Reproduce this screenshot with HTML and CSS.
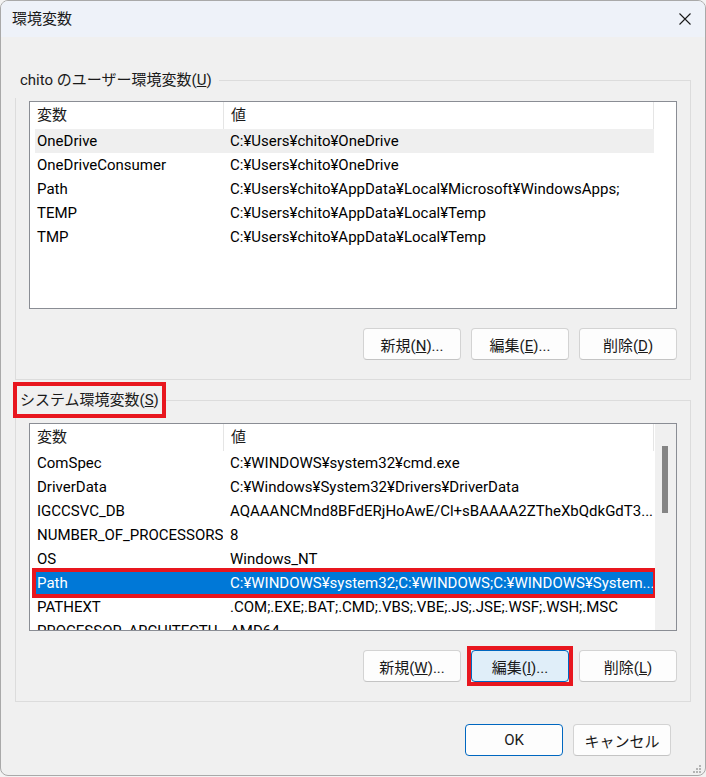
FILE: index.html
```html
<!DOCTYPE html>
<html lang="ja">
<head>
    <meta charset="UTF-8">
    <title>環境変数</title>
    <link rel="stylesheet" href="styles.css">
</head>
<body>

<div class="window">
    <div class="titlebar">
        <span class="title">環境変数</span>
        <svg class="close" width="12" height="12" viewBox="0 0 12 12">
            <path d="M0.5 0.5L11.5 11.5M11.5 0.5L0.5 11.5" stroke="#1a1a1a" stroke-width="1.1" fill="none"/>
        </svg>
    </div>

    <div class="content">
        <fieldset class="group group-user">
            <legend>chito のユーザー環境変数(<u>U</u>)</legend>
            <div class="group-body">
                <div class="list">
                    <div class="list-main">
                        <div class="list-head"><span>変数</span><span>値</span></div>
                        <div class="row hover"><span>OneDrive</span><span>C:¥Users¥chito¥OneDrive</span></div>
                        <div class="row"><span>OneDriveConsumer</span><span>C:¥Users¥chito¥OneDrive</span></div>
                        <div class="row"><span>Path</span><span>C:¥Users¥chito¥AppData¥Local¥Microsoft¥WindowsApps;</span></div>
                        <div class="row"><span>TEMP</span><span>C:¥Users¥chito¥AppData¥Local¥Temp</span></div>
                        <div class="row"><span>TMP</span><span>C:¥Users¥chito¥AppData¥Local¥Temp</span></div>
                    </div>
                    <div class="scroll-space"></div>
                </div>
                <div class="buttons">
                    <button class="btn">新規(<u>N</u>)...</button>
                    <button class="btn">編集(<u>E</u>)...</button>
                    <button class="btn">削除(<u>D</u>)</button>
                </div>
            </div>
        </fieldset>

        <fieldset class="group group-system">
            <legend class="marked">システム環境変数(<u>S</u>)</legend>
            <div class="group-body">
                <div class="list">
                    <div class="list-main">
                        <div class="list-head"><span>変数</span><span>値</span></div>
                        <div class="row"><span>ComSpec</span><span>C:¥WINDOWS¥system32¥cmd.exe</span></div>
                        <div class="row"><span>DriverData</span><span>C:¥Windows¥System32¥Drivers¥DriverData</span></div>
                        <div class="row"><span>IGCCSVC_DB</span><span>AQAAANCMnd8BFdERjHoAwE/Cl+sBAAAA2ZTheXbQdkGdT3...</span></div>
                        <div class="row"><span>NUMBER_OF_PROCESSORS</span><span>8</span></div>
                        <div class="row"><span>OS</span><span>Windows_NT</span></div>
                        <div class="row selected"><span>Path</span><span>C:¥WINDOWS¥system32;C:¥WINDOWS;C:¥WINDOWS¥System...</span></div>
                        <div class="row"><span>PATHEXT</span><span>.COM;.EXE;.BAT;.CMD;.VBS;.VBE;.JS;.JSE;.WSF;.WSH;.MSC</span></div>
                        <div class="row"><span>PROCESSOR_ARCHITECTU...</span><span>AMD64</span></div>
                    </div>
                    <div class="scrollbar"><div class="thumb"></div></div>
                </div>
                <div class="buttons">
                    <button class="btn">新規(<u>W</u>)...</button>
                    <span class="mark"><button class="btn btn-hot">編集(<u>I</u>)...</button></span>
                    <button class="btn">削除(<u>L</u>)</button>
                </div>
            </div>
        </fieldset>

        <div class="footer">
            <button class="btn btn-default">OK</button>
            <button class="btn">キャンセル</button>
        </div>
    </div>

    <svg class="grip" width="11" height="9" viewBox="0 0 11 9">
        <rect x="8" y="0" width="2" height="2" fill="#b4b4b4"/>
        <rect x="5" y="3" width="2" height="2" fill="#b4b4b4"/>
        <rect x="8" y="3" width="2" height="2" fill="#b4b4b4"/>
        <rect x="2" y="6" width="2" height="2" fill="#b4b4b4"/>
        <rect x="5" y="6" width="2" height="2" fill="#b4b4b4"/>
        <rect x="8" y="6" width="2" height="2" fill="#b4b4b4"/>
    </svg>
</div>

</body>
</html>
```

FILE: styles.css
```css
* {
    box-sizing: border-box;
}

body {
    margin: 0;
    background: #f3f3f3;
    font-family: Roboto, "Noto Sans CJK JP", sans-serif;
    font-size: 15px;
    color: #1a1a1a;
}

.window {
    position: relative;
    width: 706px;
    border: 1px solid #a9a9a9;
    border-radius: 8px;
    background: #f0f0f0;
    overflow: hidden;
}

.titlebar {
    display: flex;
    align-items: center;
    justify-content: space-between;
    height: 36px;
    padding: 0 14px 0 11px;
    background: #eef2f9;
}

.title {
    line-height: 20px;
}

.content {
    padding: 25px 14px 19px;
}

.group {
    margin: 0;
    padding: 0;
    min-width: 0;
    border: 1px solid #dcdcdc;
}

.group + .group {
    margin-top: 2px;
}

.group legend {
    margin-left: -3px;
    padding: 4px 3px;
    border: 4px solid transparent;
    line-height: 20px;
}

.group legend.marked {
    border-color: #e8161e;
}

.group-body {
    padding: 3px 13px 19px;
}

.group-system .group-body {
    padding-top: 5px;
}

.list {
    display: flex;
    height: 208px;
    border: 1px solid #8a8d94;
    background: #fff;
    overflow: hidden;
}

.list-main {
    width: 625px;
}

.list-head {
    display: grid;
    grid-template-columns: 194px 430px;
    height: 27px;
    line-height: 27px;
}

.list-head span {
    padding-left: 7px;
    border-right: 1px solid #e5e5e5;
}

.row {
    display: grid;
    grid-template-columns: 188px 1fr;
    width: 619px;
    height: 24px;
    margin-left: 5px;
    line-height: 23px;
    color: #000;
}

.row span {
    padding-top: 1px;
    white-space: nowrap;
    overflow: hidden;
}

.row span:first-child {
    padding-left: 2px;
}

.row span:last-child {
    padding-left: 7px;
}

.row.hover {
    background: #efefef;
}

.row.selected {
    background: #0078d7;
    color: #fff;
    outline: 4px solid #e8161e;
    outline-offset: -1px;
}

.scroll-space {
    width: 21px;
}

.scrollbar {
    width: 21px;
    background: #f0f0f0;
    padding: 22px 0 0 7px;
}

.thumb {
    width: 6px;
    height: 67px;
    background: #858585;
}

.buttons {
    display: flex;
    justify-content: flex-end;
    gap: 10px;
    margin-top: 19px;
}

.btn {
    width: 98px;
    height: 32px;
    padding: 0;
    border: 1px solid #d3d3d3;
    border-bottom-color: #c4c4c4;
    border-radius: 4px;
    background: #fdfdfd;
    font: inherit;
    color: #1a1a1a;
}

.mark {
    display: flex;
    margin: -4px;
    border: 4px solid #e8161e;
}

.btn-hot {
    background: #e0eef9;
    border-color: #0067c0;
}

.btn-default {
    border-color: #0067c0;
}

.footer {
    display: flex;
    justify-content: flex-end;
    gap: 10px;
    padding: 22px 20px 0 0;
}

.grip {
    position: absolute;
    right: 3px;
    bottom: 1px;
}
```
